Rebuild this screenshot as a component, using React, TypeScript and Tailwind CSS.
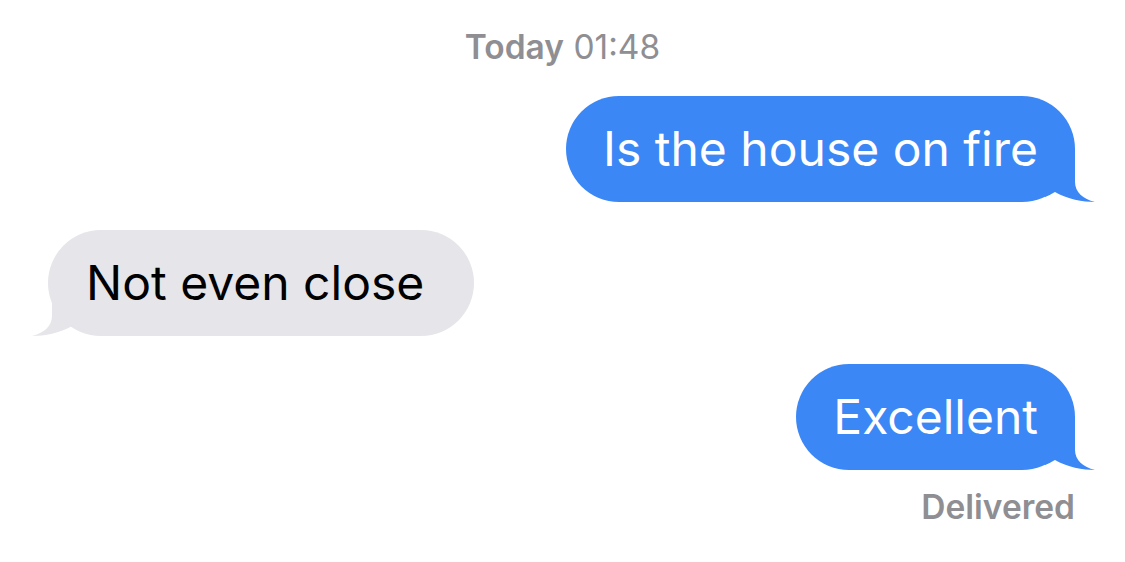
import React from "react";

const BLUE = "#3b87f6";
const GRAY = "#e5e5ea";

const Tail = ({ side, color }: { side: "left" | "right"; color: string }) => (
  <svg
    width="52"
    height="54"
    viewBox="0 0 52 54"
    className={
      side === "right"
        ? "absolute bottom-0 right-[-22px]"
        : "absolute bottom-0 left-[-18px] -scale-x-100"
    }
  >
    <path
      d="M0 0 H30 V34 C30 44 38 51 50 54 C38 54 22 51 10 44 C6 46 3 48 0 49 Z"
      fill={color}
    />
  </svg>
);

const Bubble = ({ text, mine }: { text: string; mine?: boolean }) => (
  <div className={mine ? "flex justify-end pr-[50px]" : "flex justify-start pl-[48px]"}>
    <div
      className={`relative h-[106px] flex items-center rounded-[53px] text-[48px] leading-none ${
        mine ? "bg-[#3b87f6] text-white px-[37px]" : "bg-[#e5e5ea] text-black pl-[38px] pr-[50px]"
      }`}
    >
      <Tail side={mine ? "right" : "left"} color={mine ? BLUE : GRAY} />
      <span className="relative">{text}</span>
    </div>
  </div>
);

export default function App() {
  return (
    <div
      className="w-[1125px] h-[562px] bg-white overflow-hidden"
      style={{ fontFamily: "Inter, 'Noto Sans', sans-serif" }}
    >
      <div className="pt-[28px] text-center text-[33.5px] leading-[38px] text-[#8e8e93]">
        <span className="font-semibold">Today</span> 01:48
      </div>
      <div className="mt-[30px] flex flex-col gap-[28px]">
        <Bubble text="Is the house on fire" mine />
        <Bubble text="Not even close" />
        <Bubble text="Excellent" mine />
      </div>
      <div className="mt-[18px] pr-[50px] text-right text-[33.5px] leading-[38px] font-semibold text-[#8e8e93]">
        Delivered
      </div>
    </div>
  );
}
